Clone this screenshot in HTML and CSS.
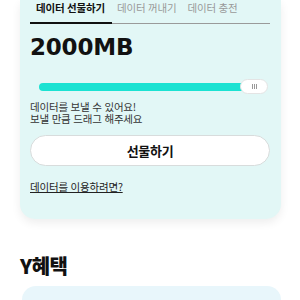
FILE: index.html
```html
<!DOCTYPE html>
<html lang="ko">
<head>
<meta charset="utf-8">
<link rel="stylesheet" href="styles.css">
</head>
<body>
<div class="page">
  <section class="card">
    <nav class="tabs">
      <span class="tab active">데이터 선물하기</span>
      <span class="tab">데이터 꺼내기</span>
      <span class="tab">데이터 충전</span>
    </nav>
    <div class="amount">2000MB</div>
    <div class="slider">
      <div class="track"></div>
      <div class="thumb"><span></span><span></span><span></span></div>
    </div>
    <div class="desc">
      <div class="line">데이터를 보낼 수 있어요!</div>
      <div class="line">보낼 만큼 드래그 해주세요</div>
    </div>
    <button class="btn">선물하기</button>
    <a class="link">데이터를 이용하려면?</a>
  </section>
  <h2 class="title">Y혜택</h2>
  <div class="card2"></div>
</div>
</body>
</html>
```
FILE: styles.css
```css
* { box-sizing: border-box; }
html, body { margin: 0; padding: 0; background: #fff; overflow: hidden; }
body { font-family: "Noto Sans CJK KR", "Noto Sans", sans-serif; color: #111; width: 300px; height: 300px; }
.page { padding: 0 19px 0 20px; }
.card {
  background: #e2f7f6;
  border-radius: 0 0 15px 15px;
  box-shadow: 0 4px 10px rgba(0,0,0,0.07);
  padding: 0 11px 0 10px;
  height: 219px;
}
.tabs {
  display: flex;
  border-bottom: 1px solid #9a9a9a;
  height: 24px;
}
.tab {
  font-size: 10.5px;
  line-height: 16px;
  color: #999;
  padding: 0 0 0 5px;
  margin-right: 6px;
  letter-spacing: -0.2px;
  white-space: nowrap;
}
.tab.active {
  color: #111;
  font-weight: 700;
  border-bottom: 2px solid #111;
  margin-bottom: -1px;
  margin-right: 0;
  padding: 0 7px 0 6px;
}
.amount {
  font-family: "DejaVu Sans", sans-serif;
  font-weight: 700;
  font-size: 23px;
  line-height: 30px;
  margin-top: 8px;
  letter-spacing: -0.2px;
}
.slider {
  position: relative;
  height: 16px;
  margin: 17px 0 0 9px;
}
.track {
  position: absolute;
  left: 0; top: 4px;
  width: 208px;
  height: 8px;
  border-radius: 4px;
  background: #1be2d2;
}
.thumb {
  position: absolute;
  left: 201px; top: 0;
  width: 28px; height: 15px;
  background: #fff;
  border-radius: 8px;
  border: 1px solid #e4e4e4;
  display: flex;
  justify-content: center;
  align-items: center;
  gap: 1px;
}
.thumb span { width: 1px; height: 5px; background: #999; }
.desc {
  margin: 6px 0 0 0;
  color: #333;
}
.line {
  font-size: 10.5px;
  line-height: 12px;
  height: 12px;
  letter-spacing: -0.2px;
  white-space: nowrap;
}
.btn {
  display: block;
  width: 240px;
  height: 31px;
  margin-top: 10px;
  background: #fff;
  border: 1px solid #d8dcdc;
  border-radius: 16px;
  font-family: inherit;
  font-weight: 700;
  font-size: 13px;
  color: #111;
  letter-spacing: -0.3px;
}
.link {
  display: inline-block;
  margin-top: 14px;
  font-size: 10.5px;
  line-height: 14px;
  color: #222;
  text-decoration: underline;
  letter-spacing: -0.2px;
}
.title {
  margin: 35px 0 0 0;
  font-weight: 900;
  font-size: 20px;
  line-height: 24px;
  letter-spacing: -0.5px;
}
.card2 {
  margin-top: 8px;
  margin-left: 2px;
  height: 40px;
  border-radius: 14px;
  background: #e8f6fb;
}
```
